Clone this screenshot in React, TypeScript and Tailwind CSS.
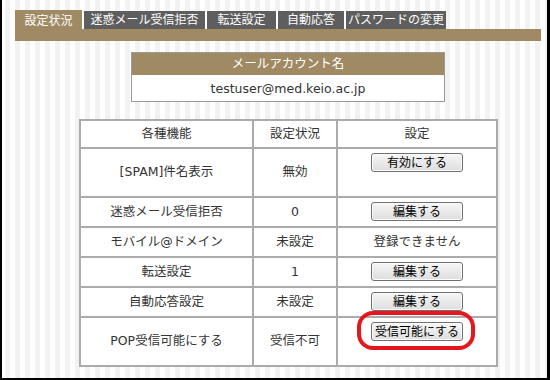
import React from 'react';

const BROWN = 'bg-[#a08a64]';

// Tab strip along the top
const tabs = [
  { label: '設定状況', w: 'w-[67px]', active: true },
  { label: '迷惑メール受信拒否', w: 'w-[123px]' },
  { label: '転送設定', w: 'w-[71px]' },
  { label: '自動応答', w: 'w-[68px]' },
  { label: 'パスワードの変更', w: 'w-[102px]' },
];

const TabBar: React.FC = () => (
  <div className="w-[526px]">
    <div className="flex items-end h-[19px]">
      {tabs.map(t =>
        t.active ? (
          <div key={t.label} className={`${t.w} h-[19px] ${BROWN} text-white flex items-center justify-center pt-[2px]`}>
            {t.label}
          </div>
        ) : (
          <div key={t.label} className={`${t.w} h-[18px] border-l-2 border-white bg-[#5e5e5e] text-white flex items-center justify-center`}>
            {t.label}
          </div>
        )
      )}
    </div>
    <div className={`h-[12px] ${BROWN}`}></div>
  </div>
);

// Classic grey push button
const OldButton: React.FC<{ label: string }> = ({ label }) => (
  <button className="w-[92px] h-[19px] rounded-[3px] border border-[#707070] bg-[linear-gradient(#f6f6f6,#dedede)] text-black text-[12px] leading-none shadow-[inset_0_0_0_1px_#fcfcfc] flex items-center justify-center">
    {label}
  </button>
);

type Row = { name: string; status: string; action?: string; note?: string; tall?: boolean; mark?: boolean };

const rows: Row[] = [
  { name: '[SPAM]件名表示', status: '無効', action: '有効にする', tall: true },
  { name: '迷惑メール受信拒否', status: '0', action: '編集する' },
  { name: 'モバイル@ドメイン', status: '未設定', note: '登録できません' },
  { name: '転送設定', status: '1', action: '編集する' },
  { name: '自動応答設定', status: '未設定', action: '編集する' },
  { name: 'POP受信可能にする', status: '受信不可', action: '受信可能にする', tall: true, mark: true },
];

const cell = 'border-r-2 border-b-2 border-[#ababab] flex items-center justify-center';

const App: React.FC = () => {
  return (
    <div className="w-[550px] h-[380px] overflow-hidden border-l-2 border-b-2 border-r-[3px] border-black bg-origin-border bg-[repeating-linear-gradient(90deg,#ffffff_0px,#ffffff_5px,#f2f2f2_5px,#f2f2f2_10px)] pt-[10px] pl-[13px] font-['DejaVu_Sans','Noto_Sans_CJK_JP',sans-serif] text-[12.5px] text-[#333]">
      <div className="text-[12px]">
        <TabBar />
      </div>

      {/* Account name box */}
      <div className="ml-[116px] mt-[11px] w-[314px] bg-white border border-[#9a9a9a]">
        <div className={`h-[22px] ${BROWN} text-white flex items-center justify-center`}>
          メールアカウント名
        </div>
        <div className="h-[24px] mt-[2px] flex items-center justify-center">
          testuser@med.keio.ac.jp
        </div>
      </div>

      {/* Settings table */}
      <div className="ml-[64px] mt-[17px] w-[419px] bg-white border-t-2 border-l-2 border-[#ababab]">
        <div className="flex h-[28px]">
          <div className={`${cell} w-[173px]`}>各種機能</div>
          <div className={`${cell} w-[84px]`}>設定状況</div>
          <div className={`${cell} w-[160px]`}>設定</div>
        </div>
        {rows.map(r => (
          <div key={r.name} className={`flex ${r.tall ? 'h-[49px]' : 'h-[30px]'}`}>
            <div className={`${cell} w-[173px]`}>{r.name}</div>
            <div className={`${cell} w-[84px]`}>{r.status}</div>
            <div className={`border-r-2 border-b-2 border-[#ababab] w-[160px] relative flex justify-center ${r.action ? 'items-start pt-[4px]' : 'items-center'}`}>
              {r.action ? <OldButton label={r.action} /> : r.note}
              {r.mark && (
                <div className="absolute left-[19px] top-[-7px] w-[118px] h-[39px] border-4 border-[#e5161d] rounded-[16px]"></div>
              )}
            </div>
          </div>
        ))}
      </div>
    </div>
  );
};

export default App;
